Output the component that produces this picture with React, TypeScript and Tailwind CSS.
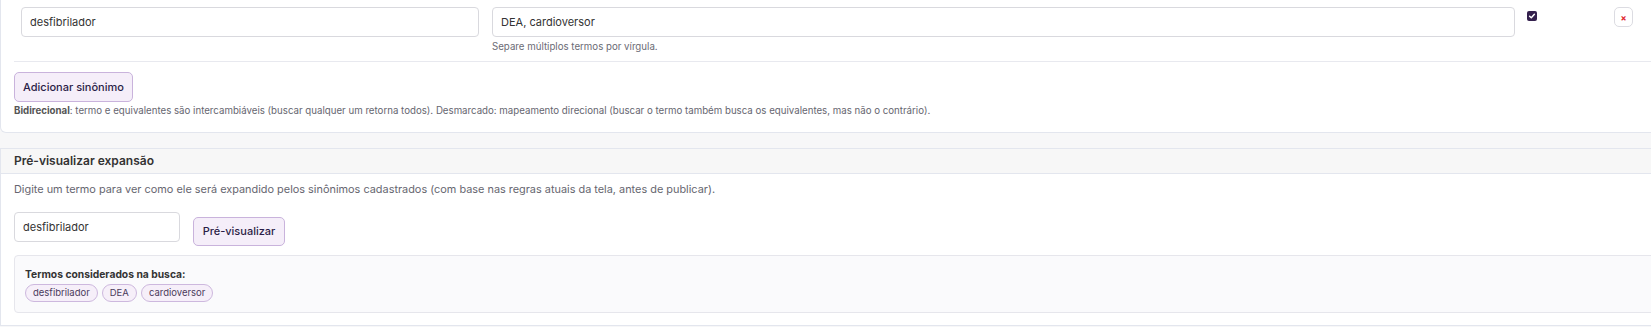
import { useState } from 'react';

function Chip({ label }: { label: string }) {
  return (
    <span className="inline-flex items-center h-[18px] px-[7px] rounded-full border border-[#cdb8de] bg-[#f6eff9] text-[9.5px] text-[#4b3b5c]">
      {label}
    </span>
  );
}

export default function App() {
  const [term, setTerm] = useState('desfibrilador');
  const [equivalents, setEquivalents] = useState('DEA, cardioversor');
  const [preview, setPreview] = useState('desfibrilador');

  return (
    <div
      className="w-[1651px] h-[327px] overflow-hidden bg-[#f7f7f8] text-[#333]"
      style={{ fontFamily: 'Inter, "Noto Sans", sans-serif' }}
    >
      {/* synonyms panel */}
      <div className="w-[1680px] bg-white border border-t-0 border-[#e3e6ee] rounded-b-md px-[13px] pb-[14px]">
        <div className="flex items-start border-b border-[#e8e9ef] px-[7px] pt-[7px] pb-[8px]">
          <input
            value={term}
            onChange={(e) => setTerm(e.target.value)}
            className="w-[458px] h-[30px] rounded-[4px] border border-[#d9d9de] px-[8px] text-[11px] text-[#333] outline-none"
          />
          <div className="ml-[13px] flex flex-col">
            <input
              value={equivalents}
              onChange={(e) => setEquivalents(e.target.value)}
              className="w-[1023px] h-[30px] rounded-[4px] border border-[#d9d9de] px-[8px] text-[11px] text-[#333] outline-none"
            />
            <p className="mt-[3px] text-[9.7px] text-[#6b6b75] leading-[13px]">
              Separe múltiplos termos por vírgula.
            </p>
          </div>
          <span className="ml-[12px] mt-[4px] w-[10px] h-[10px] rounded-[2px] bg-[#34204d] flex items-center justify-center">
            <svg viewBox="0 0 10 10" className="w-[8px] h-[8px]">
              <path d="M2 5.2 L4.1 7.2 L8 2.8" fill="none" stroke="white" strokeWidth="1.8" strokeLinecap="round" strokeLinejoin="round" />
            </svg>
          </span>
          <button className="ml-[77px] w-[19px] h-[20px] rounded-[5px] border border-[#dcdce2] bg-white flex items-center justify-center text-[9px] font-bold text-[#e0262f] leading-none">
            ×
          </button>
        </div>
        <button className="mt-[10px] h-[30px] w-[119px] rounded-[5px] border border-[#c9b3dc] bg-[#f5eef9] text-[11px] font-medium text-[#2b1d47]">
          Adicionar sinônimo
        </button>
        <p className="mt-[2px] text-[9.7px] leading-[14px] text-[#666670]">
          <span className="font-bold text-[#555]">Bidirecional</span>: termo e equivalentes são intercambiáveis (buscar qualquer um retorna todos). Desmarcado: mapeamento direcional (buscar o termo também busca os equivalentes, mas não o contrário).
        </p>
      </div>

      {/* preview panel */}
      <div className="mt-[15px] w-[1680px] bg-white border border-[#e3e6ee]">
        <div className="h-[25px] flex items-center px-[13px] bg-[#f7f7f7] border-b border-[#e3e6ee]">
          <h3 className="text-[12px] font-semibold text-[#333]">Pré-visualizar expansão</h3>
        </div>
        <div className="px-[13px] pb-[12px]">
          <p className="mt-[7px] text-[10.9px] leading-[16px] text-[#666670]">
            Digite um termo para ver como ele será expandido pelos sinônimos cadastrados (com base nas regras atuais da tela, antes de publicar).
          </p>
          <div className="mt-[15px] flex items-start gap-[13px]">
            <input
              value={preview}
              onChange={(e) => setPreview(e.target.value)}
              className="w-[166px] h-[30px] rounded-[4px] border border-[#d9d9de] px-[8px] text-[11px] text-[#333] outline-none"
            />
            <button className="mt-[5px] h-[29px] w-[92px] rounded-[5px] border border-[#c9b3dc] bg-[#f5eef9] text-[11px] font-medium text-[#2b1d47]">
              Pré-visualizar
            </button>
          </div>
          <div className="mt-[9px] w-[1656px] rounded-[4px] border border-[#e6e6ec] bg-[#fafafc] px-[10px] pt-[11px] pb-[10px]">
            <p className="text-[10.3px] font-bold text-[#333] leading-[14px]">Termos considerados na busca:</p>
            <div className="mt-[3px] flex gap-[4px]">
              <Chip label="desfibrilador" />
              <Chip label="DEA" />
              <Chip label="cardioversor" />
            </div>
          </div>
        </div>
      </div>
    </div>
  );
}
